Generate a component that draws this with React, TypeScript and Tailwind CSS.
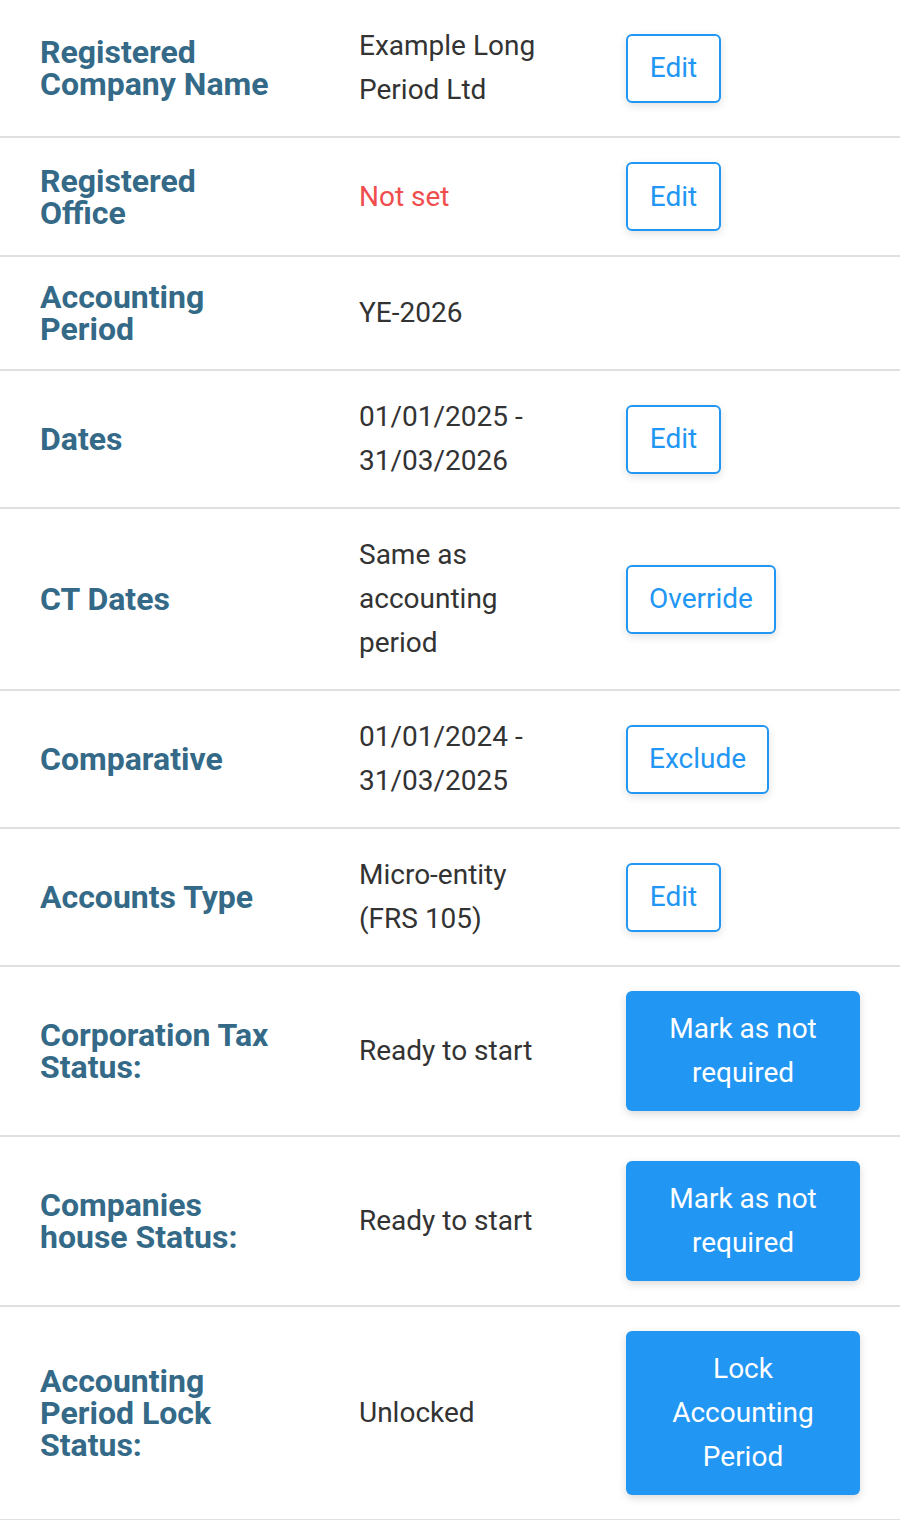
const rows: {
  label: string;
  value: string;
  tone?: "red";
  action?: { text: string; kind: "outline" | "solid" };
}[] = [
  { label: "Registered Company Name", value: "Example Long Period Ltd", action: { text: "Edit", kind: "outline" } },
  { label: "Registered Office", value: "Not set", tone: "red", action: { text: "Edit", kind: "outline" } },
  { label: "Accounting Period", value: "YE-2026" },
  { label: "Dates", value: "01/01/2025 - 31/03/2026", action: { text: "Edit", kind: "outline" } },
  { label: "CT Dates", value: "Same as accounting period", action: { text: "Override", kind: "outline" } },
  { label: "Comparative", value: "01/01/2024 - 31/03/2025", action: { text: "Exclude", kind: "outline" } },
  { label: "Accounts Type", value: "Micro-entity (FRS 105)", action: { text: "Edit", kind: "outline" } },
  { label: "Corporation Tax Status:", value: "Ready to start", action: { text: "Mark as not required", kind: "solid" } },
  { label: "Companies house Status:", value: "Ready to start", action: { text: "Mark as not required", kind: "solid" } },
  { label: "Accounting Period Lock Status:", value: "Unlocked", action: { text: "Lock Accounting Period", kind: "solid" } },
];

export default function App() {
  return (
    <div className="w-[900px] bg-white font-['Roboto',sans-serif]">
      {rows.map((row, i) => (
        <div key={i} className="flex items-center border-b-2 border-[#e0e0e0] py-6">
          <div className="w-[359px] shrink-0 pl-10 pr-[79px] text-[32px] font-bold leading-[32px] text-[#346a87]">
            {row.label}
          </div>
          <div
            className={
              row.tone === "red"
                ? "w-[267px] shrink-0 pr-[67px] text-[28px] leading-[44px] text-[#f04e4e]"
                : "w-[267px] shrink-0 pr-[67px] text-[28px] leading-[44px] text-[#333333]"
            }
          >
            {row.value}
          </div>
          <div className="w-[234px] shrink-0">
            {row.action?.kind === "outline" && (
              <button className="min-w-[95px] rounded-md border-2 border-[#2196f3] bg-white px-[21px] py-[10.5px] text-center text-[28px] leading-[44px] text-[#2196f3] shadow-[0_3px_8px_rgba(0,0,0,0.12)]">
                {row.action.text}
              </button>
            )}
            {row.action?.kind === "solid" && (
              <button className="w-full rounded-md bg-[#2196f3] px-[30px] py-4 text-center text-[28px] leading-[44px] text-white shadow-[0_3px_8px_rgba(0,0,0,0.15)]">
                {row.action.text}
              </button>
            )}
          </div>
        </div>
      ))}
    </div>
  );
}
